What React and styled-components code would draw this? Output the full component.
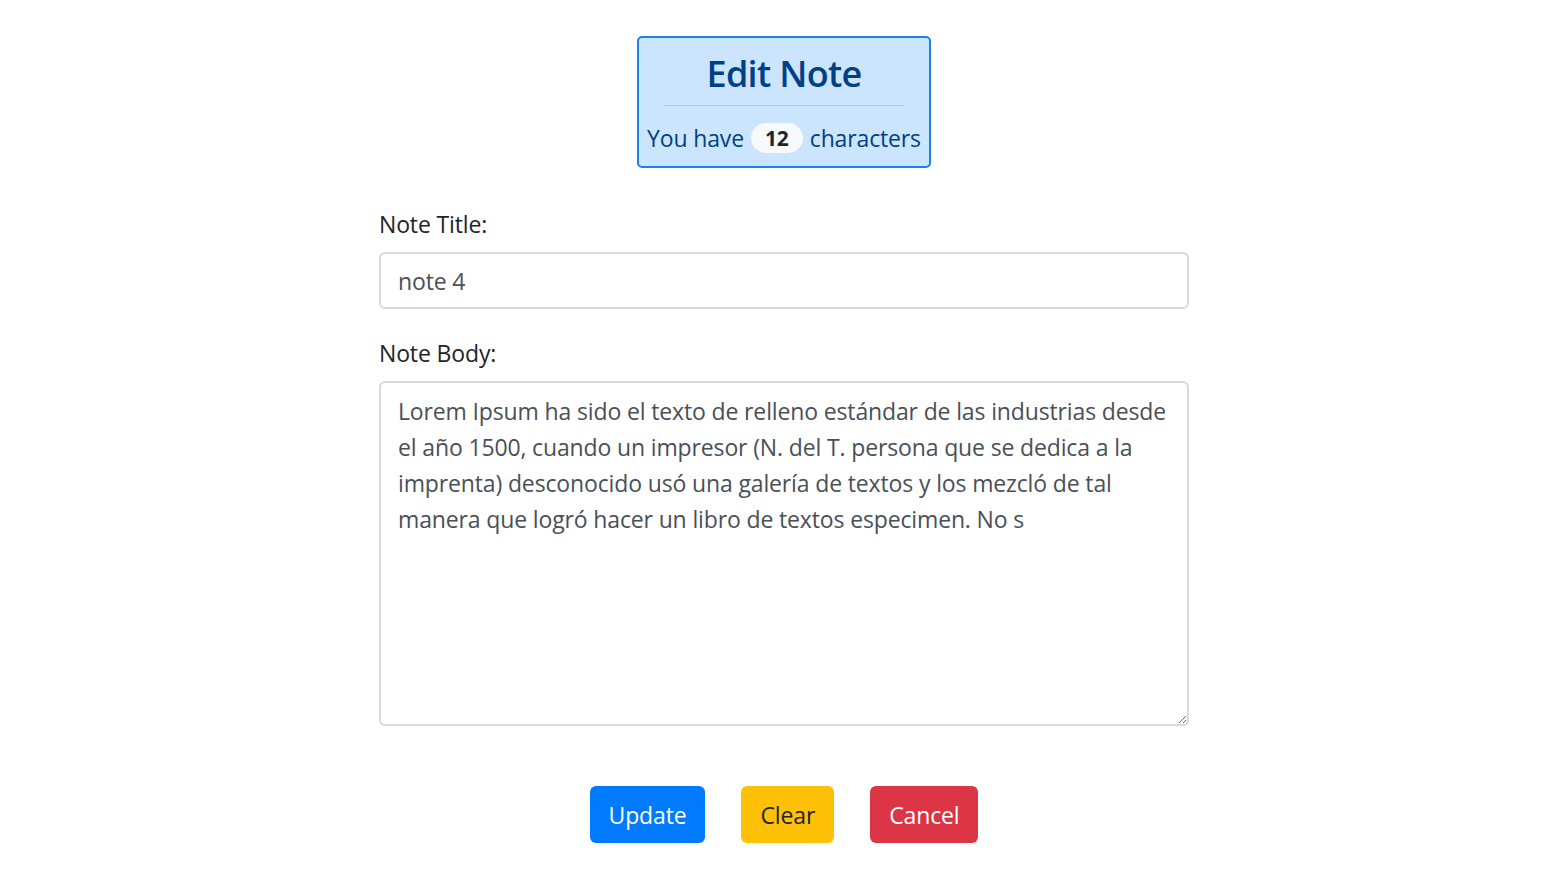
import React from "react";
import styled, { createGlobalStyle } from "styled-components";

const Global = createGlobalStyle`
  html, body { margin: 0; padding: 0; background: #fff; }
  body { font-family: "Segoe UI", "Open Sans", "Noto Sans", sans-serif; color: #212529; letter-spacing: -0.14px; }
  * { box-sizing: border-box; }
`;

const Page = styled.div`
  display: flex;
  flex-direction: column;
  align-items: center;
  padding-top: 36px;
`;

const HeaderBox = styled.div`
  width: 294px;
  height: 132px;
  border: 2px solid #1a82e8;
  border-radius: 5px;
  background: #cce5ff;
  color: #004085;
  display: flex;
  flex-direction: column;
  align-items: center;
  padding: 12px 0 10px;
`;

const Title = styled.h3`
  margin: 0;
  font-size: 36px;
  font-weight: 600;
  letter-spacing: -0.7px;
  line-height: 48px;
  color: #004085;
`;

const Rule = styled.hr`
  align-self: stretch;
  margin: 7px 24px 14px;
  border: 0;
  border-top: 1px solid #9fcdff;
  height: 0;
`;

const Count = styled.div`
  font-size: 23px;
  line-height: 36px;
  display: flex;
  align-items: center;
  gap: 7px;
  white-space: nowrap;
`;

const Badge = styled.span`
  display: inline-flex;
  align-items: center;
  justify-content: center;
  height: 30px;
  padding: 0 14px;
  border-radius: 15px;
  background: #f8f9fa;
  color: #212529;
  font-weight: 700;
  font-size: 21px;
`;

const Form = styled.form`
  width: 810px;
  margin-top: 38px;
  display: flex;
  flex-direction: column;
`;

const Group = styled.div`
  display: flex;
  flex-direction: column;
  margin-bottom: ${(p) => p.$mb || 0}px;
`;

const Label = styled.label`
  font-size: 23px;
  line-height: 36px;
  margin-bottom: 10px;
  color: #212529;
`;

const Input = styled.input`
  height: 57px;
  border: 2px solid #d6d9dd;
  border-radius: 6px;
  padding: 0 17px;
  font-family: inherit;
  letter-spacing: inherit;
  font-size: 23px;
  color: #495057;
  outline: none;
  background: #fff;
`;

const TextArea = styled.textarea`
  height: 345px;
  border: 2px solid #d6d9dd;
  border-radius: 6px;
  padding: 10px 17px;
  font-family: inherit;
  letter-spacing: inherit;
  font-size: 23px;
  line-height: 36px;
  color: #495057;
  outline: none;
  resize: both;
  background: #fff;
`;

const Actions = styled.div`
  display: flex;
  justify-content: center;
  gap: 36px;
  margin-top: 60px;
`;

const COLORS = {
  primary: { bg: "#007bff", fg: "#fff" },
  warning: { bg: "#ffc107", fg: "#212529" },
  danger: { bg: "#dc3545", fg: "#fff" },
};

const Button = styled.button`
  height: 57px;
  padding: 0 ${(p) => p.$px}px;
  border: none;
  border-radius: 6px;
  font-family: inherit;
  letter-spacing: inherit;
  font-size: 23px;
  background: ${(p) => COLORS[p.$variant].bg};
  color: ${(p) => COLORS[p.$variant].fg};
  cursor: pointer;
`;

const BODY =
  "Lorem Ipsum ha sido el texto de relleno estándar de las industrias desde el año 1500, cuando un impresor (N. del T. persona que se dedica a la imprenta) desconocido usó una galería de textos y los mezcló de tal manera que logró hacer un libro de textos especimen. No s";

export default function App() {
  return (
    <>
      <Global />
      <Page>
        <HeaderBox>
          <Title>Edit Note</Title>
          <Rule />
          <Count>
            <span>You have</span>
            <Badge>12</Badge>
            <span>characters</span>
          </Count>
        </HeaderBox>
        <Form onSubmit={(e) => e.preventDefault()}>
          <Group $mb={26}>
            <Label htmlFor="title">Note Title:</Label>
            <Input id="title" defaultValue="note 4" />
          </Group>
          <Group>
            <Label htmlFor="body">Note Body:</Label>
            <TextArea id="body" defaultValue={BODY} />
          </Group>
          <Actions>
            <Button type="button" $variant="primary" $px={19}>Update</Button>
            <Button type="button" $variant="warning" $px={19}>Clear</Button>
            <Button type="button" $variant="danger" $px={19}>Cancel</Button>
          </Actions>
        </Form>
      </Page>
    </>
  );
}
